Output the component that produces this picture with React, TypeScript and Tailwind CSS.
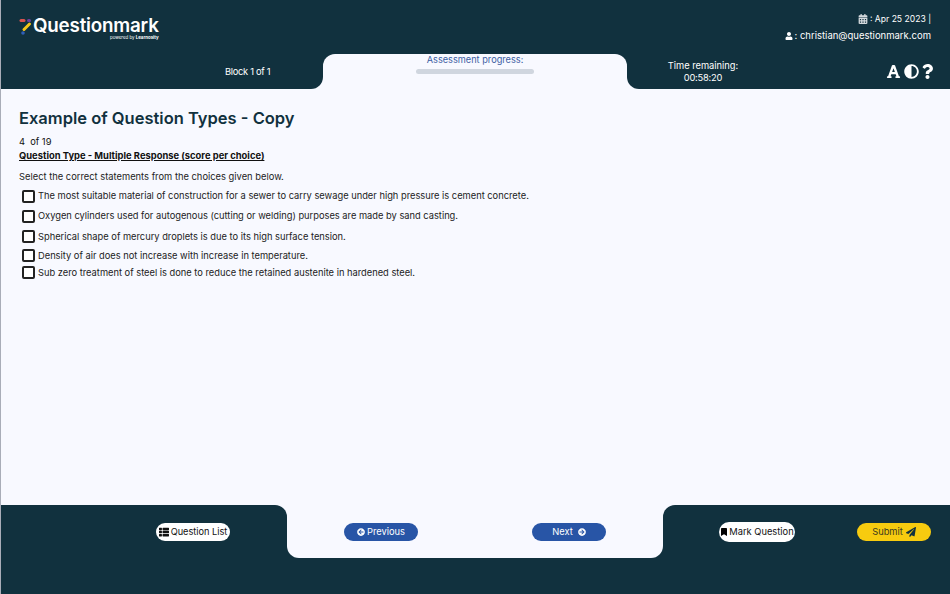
import React from 'react';
import {
  FaAdjust,
  FaArrowCircleLeft,
  FaArrowCircleRight,
  FaBookmark,
  FaCalendarAlt,
  FaFont,
  FaPaperPlane,
  FaQuestion,
  FaThList,
  FaUser,
} from 'react-icons/fa';

const choices = [
  { text: 'The most suitable material of construction for a sewer to carry sewage under high pressure is cement concrete.', h: 'h-[20px]' },
  { text: 'Oxygen cylinders used for autogenous (cutting or welding) purposes are made by sand casting.', h: 'h-[20px]' },
  { text: 'Spherical shape of mercury droplets is due to its high surface tension.', h: 'h-[21px]' },
  { text: 'Density of air does not increase with increase in temperature.', h: 'h-[17px]' },
  { text: 'Sub zero treatment of steel is done to reduce the retained austenite in hardened steel.', h: 'h-[17px]' },
];

const App: React.FC = () => {
  return (
    <div className="relative h-[594px] w-[950px] overflow-hidden flex flex-col bg-[#f8f9ff] text-[#11313e] border-l border-[#a9adb8] font-['Inter','Liberation_Sans',sans-serif]">
      <span className="absolute left-[-1px] top-[432px] h-[6px] w-[1px] bg-[#c98a8a]" />
      <header className="shrink-0">
        <div className="h-[54px] bg-[#11313e] flex justify-between pl-[18px] pr-[19px]">
          <div className="pt-[17px]">
            <div className="flex items-center h-[18px]">
              <svg width="13" height="17" viewBox="0 0 13 17" className="mr-[1px]">
                <path d="M2 2.5 L5 2.5" stroke="#d9534f" strokeWidth="3" strokeLinecap="round" />
                <path d="M9.5 2.5 L10.5 2.5" stroke="#6b3fa0" strokeWidth="3" strokeLinecap="round" />
                <path d="M10.5 6 L5 11.5" stroke="#f5c518" strokeWidth="3" strokeLinecap="round" />
                <circle cx="4" cy="15" r="1.8" fill="#2f5fb3" />
              </svg>
              <span className="text-[18.8px] font-semibold text-white leading-none tracking-[-0.2px]">Questionmark</span>
            </div>
            <div className="mt-[1px] text-[4.4px] leading-none text-white text-right">
              powered by <span className="font-bold">Learnosity</span>
            </div>
          </div>
          <div className="text-white text-[9.5px] text-right pt-[11px]">
            <div className="h-[16px] text-[8.6px] flex items-center justify-end gap-[2px]">
              <FaCalendarAlt className="text-[10px] text-[#d5dade]" />
              <span>: Apr 25 2023 |</span>
            </div>
            <div className="h-[16px] mt-[1px] flex items-center justify-end gap-[1px]">
              <FaUser className="text-[8px]" />
              <span>: christian@questionmark.com</span>
            </div>
          </div>
        </div>
        <div className="flex h-[35px] bg-[#f8f9ff]">
          <div className="w-[322px] bg-[#11313e] rounded-br-xl text-white text-[9.3px] flex items-center">
            <span className="ml-[224px] tracking-[-0.3px]">Block 1 of 1</span>
          </div>
          <div className="w-[304px] bg-[#11313e]">
            <div className="h-full bg-[#f8f9ff] rounded-t-xl flex flex-col items-center">
              <div className="text-[9.2px] leading-none text-[#3c5ea3] mt-[1px]">Assessment progress:</div>
              <div className="w-[118px] h-[5px] rounded-full bg-[#d0d6df] mt-[5px]" />
            </div>
          </div>
          <div className="flex-1 bg-[#11313e] rounded-bl-xl text-white flex items-center justify-between pr-[15px]">
            <div className="w-[152px] text-center text-[9.3px] leading-[12px]">
              <div>Time remaining:</div>
              <div className="tracking-[-0.2px]">00:58:20</div>
            </div>
            <div className="flex items-center gap-[3px]">
              <FaFont className="text-[15px]" />
              <FaAdjust className="text-[15px]" />
              <FaQuestion className="text-[15px] ml-[-2px]" />
            </div>
          </div>
        </div>
      </header>

      <main className="flex-1 pl-[18px] pt-[19px]">
        <h1 className="text-[16.5px] leading-[20px] font-semibold">Example of Question Types - Copy</h1>
        <p className="mt-[8px] text-[9.3px] leading-[12px] text-[#111]">4&nbsp; of 19</p>
        <p className="mt-[1px] text-[9.4px] leading-[13px] font-bold underline text-[#111]">Question Type - Multiple Response (score per choice)</p>
        <p className="mt-[8px] text-[9.35px] leading-[13px] text-[#222]">Select the correct statements from the choices given below.</p>
        <ul className="mt-[3px]">
          {choices.map((c) => (
            <li key={c.text} className={`flex items-center ${c.h} text-[9.3px] text-[#222]`}>
              <span className="ml-[3px] mr-[3px] w-[13px] h-[13px] border-2 border-[#222] rounded-[2px] bg-white shrink-0" />
              <span>{c.text}</span>
            </li>
          ))}
        </ul>
      </main>

      <footer className="shrink-0">
        <div className="flex h-[53px] bg-[#f8f9ff]">
          <div className="w-[286px] bg-[#11313e] rounded-tr-xl flex items-start justify-end pr-[57px] pt-[18px]">
            <button className="h-[18px] w-[74px] rounded-full bg-white text-[#111] text-[9.2px] flex items-center justify-center gap-[2px] whitespace-nowrap">
              <FaThList className="text-[10px]" />
              Question List
            </button>
          </div>
          <div className="w-[376px] bg-[#11313e]">
            <div className="h-full bg-[#f8f9ff] rounded-b-xl flex items-start justify-between px-[57px] pt-[18px]">
              <button className="h-[18px] w-[74px] rounded-full bg-[#2855a6] text-white text-[9.3px] flex items-center justify-center gap-[2px]">
                <FaArrowCircleLeft className="text-[8px]" />
                Previous
              </button>
              <button className="h-[18px] w-[74px] rounded-full bg-[#2855a6] text-white text-[9.3px] flex items-center justify-center gap-[5px]">
                Next
                <FaArrowCircleRight className="text-[8px]" />
              </button>
            </div>
          </div>
          <div className="flex-1 bg-[#11313e] rounded-tl-xl flex items-start justify-between pl-[56px] pr-[19px] pt-[17px]">
            <button className="h-[20px] w-[76px] rounded-full bg-white text-[#111] text-[9.3px] flex items-center justify-center gap-[1px] whitespace-nowrap">
              <FaBookmark className="text-[8px] text-black" />
              Mark Question
            </button>
            <button className="mt-[1px] h-[18px] w-[74px] rounded-full bg-[#f7cb0f] text-[#3a3a20] text-[9.3px] flex items-center justify-center gap-[3px]">
              Submit
              <FaPaperPlane className="text-[10px] text-[#11313e]" />
            </button>
          </div>
        </div>
        <div className="h-[36px] bg-[#11313e]" />
      </footer>
    </div>
  );
};

export default App;
